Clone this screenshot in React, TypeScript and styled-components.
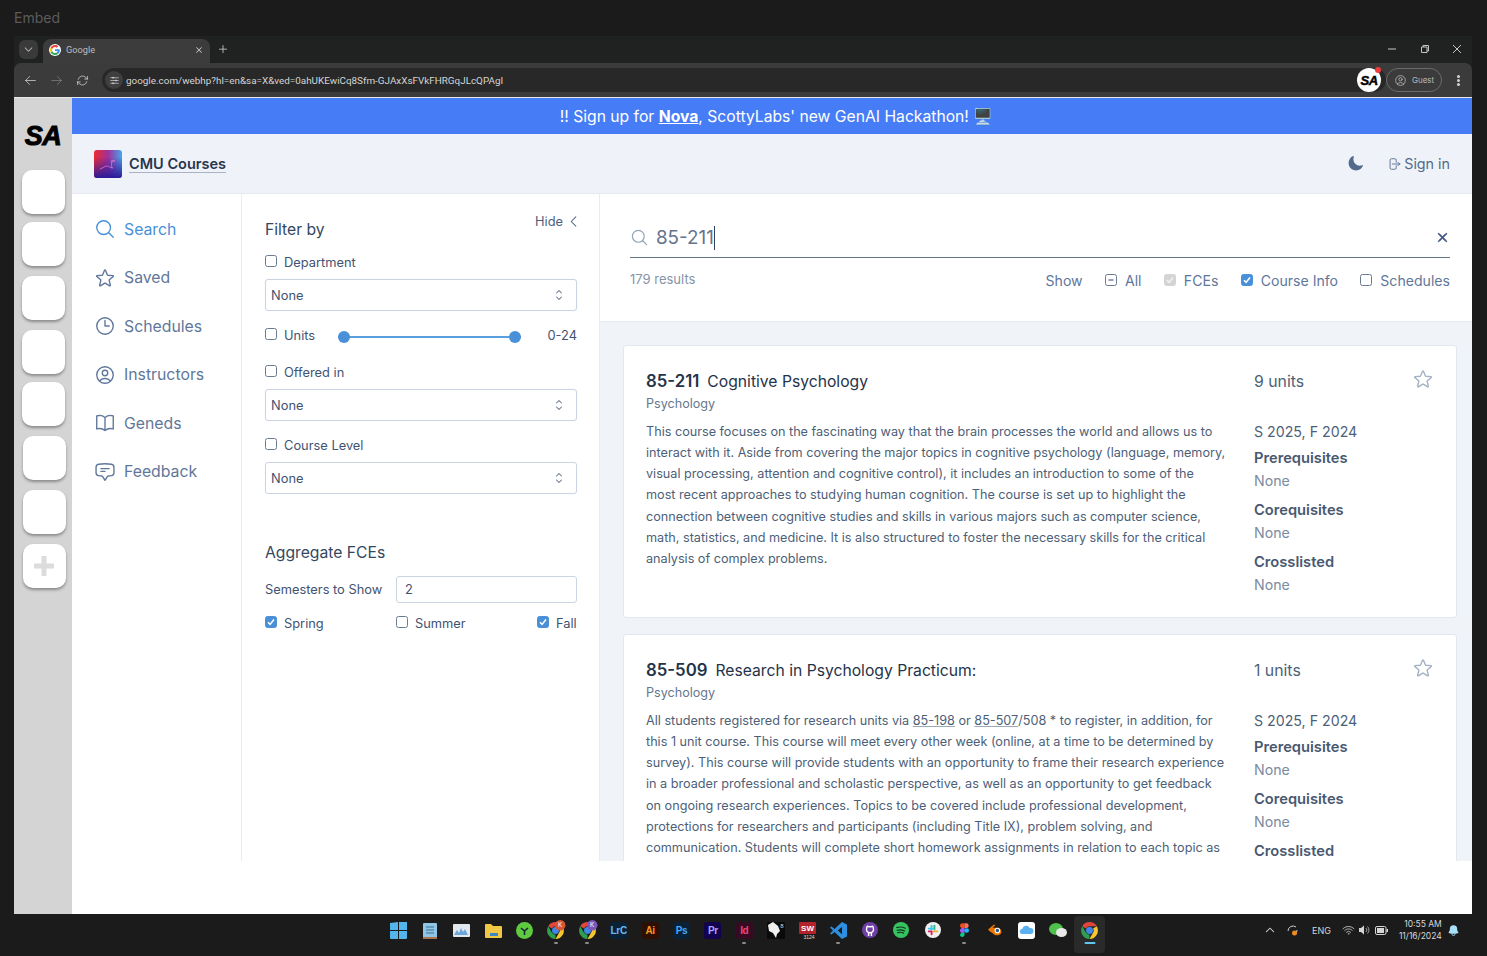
import { ReactNode } from 'react';
import styled, { createGlobalStyle } from 'styled-components';
import {
  HiOutlineMagnifyingGlass, HiOutlineStar, HiOutlineClock, HiOutlineUserCircle, HiOutlineBookOpen,
  HiOutlineChatBubbleBottomCenterText, HiMoon, HiOutlineArrowRightOnRectangle, HiChevronUpDown,
  HiChevronLeft, HiXMark, HiOutlineArrowLeft, HiOutlineArrowRight, HiOutlineArrowPath, HiPlus,
  HiChevronDown, HiChevronUp, HiOutlineAdjustmentsHorizontal, HiOutlineWifi, HiBell,
} from 'react-icons/hi2';

const GlobalStyle = createGlobalStyle`
  html, body { margin: 0; padding: 0; background: #1b1b1b; }
  body { font-family: "Inter", "Liberation Sans", sans-serif; }
  * { box-sizing: border-box; }
`;

const Screen = styled.div`
  width: 1487px; height: 956px; background: #1b1b1b; display: flex; flex-direction: column; overflow: hidden;
`;
const EmbedBar = styled.div`
  height: 36px; padding: 9px 0 0 14px; color: #5c5c5c; font-size: 14px; line-height: 17px;
`;
const Browser = styled.div`
  margin-left: 14px; width: 1458px; height: 878px; display: flex; flex-direction: column; background: #202221;
`;
const TabStrip = styled.div`
  height: 27px; padding: 3px 0 0 5px; display: flex; align-items: flex-start; color: #d8d8d8;
`;
const TabMenu = styled.div`
  width: 19px; height: 19px; margin-top: 1px; border-radius: 6px; background: #3a3a3a; display: flex; align-items: center; justify-content: center; font-size: 11px;
`;
const Tab = styled.div`
  width: 167px; height: 24px; margin-left: 5px; padding: 0 6px 3px; background: #3c3c3c; border-radius: 8px 8px 0 0; display: flex; align-items: center; gap: 5px; font-family: "Roboto", sans-serif; font-size: 9.2px; color: #bdbdbd;
`;
const TabClose = styled.span`
  margin-left: auto; display: flex; font-size: 10px; color: #e0e0e0;
`;
const NewTab = styled.div`
  margin: 4px 0 0 7px; display: flex; font-size: 12px;
`;
const WindowButtons = styled.div`
  margin-left: auto; width: 75px; margin-right: 10px; margin-top: 5px; display: flex; align-items: center; justify-content: space-between; color: #c4c4c4;
`;
const Toolbar = styled.div`
  height: 34px; background: #3b3b3b; border-radius: 7px 7px 0 0; display: flex; align-items: center; padding: 0 9px 0 10px; color: #c7c7c7;
`;
const NavIcons = styled.div`
  display: flex; gap: 13px; width: 78px; font-size: 13px;
`;
const NavIcon = styled.span<{ $dim?: boolean }>`
  display: flex; color: ${p => (p.$dim ? '#7a7a7a' : '#c7c7c7')};
`;
const Omnibox = styled.div`
  width: 1284px; height: 24px; border-radius: 12px; background: #282828; display: flex; align-items: center; padding: 0 3px; font-family: "Roboto", sans-serif; font-size: 9.9px; color: #d5d5d5; position: relative;
`;
const SiteInfo = styled.span`
  width: 18px; height: 18px; border-radius: 50%; background: #3f3f3f; display: flex; align-items: center; justify-content: center; font-size: 11px; margin-right: 3px;
`;
const ExtBadge = styled.div`
  position: absolute; right: 5px; top: 0; width: 24px; height: 24px; border-radius: 50%; background: #fff; display: flex; align-items: center; justify-content: center;
`;
const ExtDot = styled.span`
  position: absolute; right: 0; top: -1px; width: 6px; height: 6px; border-radius: 50%; background: #ee3b3b;
`;
const SaMark = styled.span<{ $size: number }>`
  font-family: "Liberation Sans", sans-serif; font-weight: 700; font-style: italic; color: #000; letter-spacing: -0.5px; font-size: ${p => p.$size}px; -webkit-text-stroke: ${p => p.$size / 28}px #000;
`;
const GuestPill = styled.div`
  width: 56px; height: 24px; border: 1px solid #6b6b6b; border-radius: 12px; display: flex; align-items: center; padding-left: 7px; gap: 5px; font-size: 8px; color: #b8b8b8;
`;
const KebabDots = styled.span`
  margin-left: 14.5px; width: 3px; height: 3px; border-radius: 50%; background: #d0d0d0; box-shadow: 0 -4px 0 #d0d0d0, 0 4px 0 #d0d0d0;
`;
const Viewport = styled.div`
  flex: 1; display: flex; min-height: 0; background: #fff; border-top: 1px solid #e8e8e8;
`;
const SaRail = styled.div`
  width: 58px; background: #d4d4d4; display: flex; flex-direction: column; align-items: center; padding-top: 23px;
`;
const RailTile = styled.div<{ $gap: number; $shift: number }>`
  width: 43px; height: 44px; margin-left: ${p => p.$shift}px; margin-bottom: ${p => p.$gap}px; border-radius: 10px; background: #fff; box-shadow: 0 2px 3px rgba(0,0,0,0.35); display: flex; align-items: center; justify-content: center; color: #dcdcdc;
`;
const RailLogo = styled.div`
  height: 49px; display: flex;
`;
const Page = styled.div`
  width: 1400px; display: flex; flex-direction: column;
`;
const Banner = styled.div`
  height: 36px; background: #467cf5; color: #fff; font-size: 15.7px; line-height: 37px; text-align: center; padding-left: 9px;
  b { font-weight: 700; text-decoration: underline; }
`;
const Header = styled.div`
  height: 60px; background: #eff3f9; border-bottom: 1px solid #e5e9f0; display: flex; align-items: center; padding: 0 22px 0 22px;
`;
const Brand = styled.a`
  margin: 1px 0 0 7px; font-size: 14.5px; font-weight: 600; color: #27364d; border-bottom: 1px solid #a8b4c6; line-height: 17px;
`;
const HeaderActions = styled.div`
  margin-left: auto; display: flex; align-items: center; color: #526a8c; font-size: 14.3px;
`;
const SignIn = styled.span`
  margin-left: 23px; display: flex; align-items: center; gap: 3px;
`;
const Columns = styled.div`
  height: 667px; display: flex; overflow: hidden;
`;
const NavCol = styled.nav`
  width: 170px; padding: 21px 0 0 22px; display: flex; flex-direction: column; gap: 20.6px; border-right: 1px solid #e8edf4;
`;
const NavItem = styled.div<{ $active?: boolean }>`
  height: 28px; display: flex; align-items: center; gap: 8px; font-size: 15.8px; color: ${p => (p.$active ? '#4a90d9' : '#5f779a')};
`;
const FilterCol = styled.aside`
  width: 358px; padding: 0 22px 0 23px; border-right: 1px solid #e8edf4; color: #3f5372; font-size: 12.85px;
`;
const FilterHead = styled.div`
  height: 58px; display: flex; justify-content: space-between; padding-top: 20px;
`;
const FilterTitle = styled.h2<{ $mt?: number }>`
  margin: ${p => p.$mt ?? 6}px 0 0; font-size: 15.7px; font-weight: 400; line-height: 20px; color: #34475f;
`;
const HideBtn = styled.span`
  display: flex; align-items: flex-start; gap: 3px; line-height: 15px; color: #4a5f7e; margin-right: -4px;
`;
const CheckRow = styled.label<{ $h?: number; $mt?: number }>`
  display: flex; align-items: center; gap: 7px; height: ${p => p.$h ?? 20}px; margin-top: ${p => p.$mt ?? 0}px;
`;
const Box = styled.span<{ $state: 'off' | 'on' | 'dim' | 'mixed' }>`
  width: 12px; height: 12px; margin-top: -2px; border-radius: 2.5px; flex: none; display: flex; align-items: center; justify-content: center;
  border: 1px solid ${p => (p.$state === 'on' ? '#4a90d9' : p.$state === 'dim' ? '#d4d4d4' : '#6b7a8e')};
  background: ${p => (p.$state === 'on' ? '#4a90d9' : p.$state === 'dim' ? '#d4d4d4' : '#fff')};
`;
const Select = styled.div`
  height: 32px; margin-top: 7px; padding: 0 9px 0 5px; border: 1px solid #cbd5e1; border-radius: 3px; display: flex; align-items: center; justify-content: space-between; color: #3f5372; box-shadow: 0 0 1px #dde4ee;
`;
const SliderWrap = styled.div`
  width: 183px; margin: 3px 0 0 16px; height: 12px; position: relative; display: flex; align-items: center;
`;
const SliderLine = styled.div`
  width: 100%; height: 2px; background: #5a9fdd;
`;
const SliderThumb = styled.span<{ $end?: boolean }>`
  position: absolute; top: 0; width: 12px; height: 12px; border-radius: 50%; background: #4a90d9;
  ${p => (p.$end ? 'right: 0;' : 'left: 0;')}
`;
const Spacer = styled.span`
  margin-left: auto;
`;
const SemRow = styled.div`
  margin-top: 13px; display: flex; align-items: center; justify-content: space-between;
`;
const SemInput = styled.div`
  width: 181px; height: 27px; border: 1px solid #cbd5e1; border-radius: 3px; padding-left: 8px; line-height: 26px;
`;
const SeasonRow = styled.div`
  margin-top: 10px; display: flex; height: 20px;
`;
const SeasonCell = styled.div<{ $w: number }>`
  width: ${p => p.$w}px;
`;
const ResultsCol = styled.main`
  width: 872px; background: #f0f4f8; display: flex; flex-direction: column;
`;
const SearchPane = styled.div`
  height: 128px; flex: none; background: #fff; border-bottom: 1px solid #e5e9f0; padding: 22px 22px 0 30px;
`;
const SearchRow = styled.div`
  height: 42px; border-bottom: 1px solid #64748b; display: flex; align-items: center; padding-top: 2px; color: #94a3b8;
`;
const SearchText = styled.span`
  margin-left: 7px; font-size: 18.8px; color: #64748b; border-right: 1px solid #33415a; line-height: 24px;
`;
const ClearBtn = styled.span`
  margin-left: auto; display: flex; color: #3a5080; font-size: 15px;
`;
const ResultsMeta = styled.div`
  margin-top: 14px; display: flex; align-items: center; justify-content: space-between; color: #5f779a; font-size: 14.1px;
`;
const ResultCount = styled.span`
  font-size: 13px; color: #8594a8; margin-top: -4px;
`;
const ShowRow = styled.div`
  display: flex; align-items: center; gap: 22.3px;
`;
const ShowItem = styled.span`
  display: flex; align-items: center; gap: 8px;
`;
const CardList = styled.div`
  padding: 23px 15px 0 23px; display: flex; flex-direction: column; gap: 16px;
`;
const Card = styled.article`
  height: 273px; flex: none; background: #fff; border: 1px solid #e2e8f0; border-radius: 3px; padding: 24px 22px 0; display: flex;
`;
const CardMain = styled.div`
  width: 608px;
`;
const CardTitle = styled.h3`
  margin: 0; font-size: 15.7px; line-height: 22px; font-weight: 400; color: #253349;
  b { font-size: 16.8px; font-weight: 600; margin-right: 8px; }
`;
const CardDept = styled.div`
  margin-top: 2px; font-size: 12.6px; line-height: 18px; color: #66788f;
`;
const CardDesc = styled.p`
  margin: 8px 0 0; width: 580px; font-size: 12.65px; line-height: 21.15px; color: #4d5f78;
  u { text-decoration-color: #9aa8ba; }
`;
const CardSide = styled.div`
  flex: 1; padding-top: 1px; color: #4d5f78; font-size: 14.2px; line-height: 22px;
`;
const UnitsRow = styled.div`
  display: flex; justify-content: space-between; align-items: flex-start; font-size: 15.8px; height: 50px;
`;
const StarBtn = styled.span`
  display: flex; color: #a3b1c4; margin-top: -3px; font-size: 22px;
`;
const SideBlock = styled.div`
  margin-top: 4px; height: 48px;
`;
const SideYears = styled.div`
  height: 22px;
`;
const SideLabel = styled.div`
  font-weight: 600; color: #48586f; font-size: 14.7px;
`;
const SideNone = styled.div`
  color: #7b8ba0; margin-top: 1px;
`;
const Taskbar = styled.div`
  height: 42px; display: flex; align-items: flex-start; padding: 2px 0 0 383.3px;
`;
const AppCell = styled.div<{ $focus?: boolean }>`
  width: 31.4px; height: 37px; flex: none; display: flex; align-items: center; justify-content: center; position: relative; border-radius: 4px; padding-bottom: 9px;
  background: ${p => (p.$focus ? '#2a2a2a' : 'transparent')};
`;
const RunDot = styled.span<{ $focus?: boolean }>`
  position: absolute; bottom: 9px; left: 50%; transform: translateX(-50%); height: 2px; border-radius: 1px;
  width: ${p => (p.$focus ? 11 : 4)}px; background: ${p => (p.$focus ? '#60c5f1' : '#8a8a8a')};
`;
const AdobeTile = styled.span<{ $bg: string; $fg: string }>`
  width: 17px; height: 17px; border-radius: 3px; font-family: "Liberation Sans", sans-serif; font-size: 10px; font-weight: 700; line-height: 17px; text-align: center; letter-spacing: -0.3px;
  background: ${p => p.$bg}; color: ${p => p.$fg};
`;
const Tray = styled.div`
  margin-left: auto; display: flex; align-items: center; height: 28px; color: #d5d5d5; font-size: 9px; width: 223px;
`;
const TrayItem = styled.span<{ $ml?: number }>`
  display: flex; align-items: center; margin-left: ${p => p.$ml ?? 0}px;
`;
const Clock = styled.div`
  margin-left: 11px; text-align: right; font-size: 8.5px; line-height: 12px; color: #d8d8d8;
`;

const Check = ({ color = '#fff' }: { color?: string }) => (
  <svg width="10" height="10" viewBox="0 0 10 10"><path d="M2 5.2l2.1 2.2L8 2.6" fill="none" stroke={color} strokeWidth="1.6" /></svg>
);

const CheckBox = ({ state }: { state: 'off' | 'on' | 'dim' | 'mixed' }) => (
  <Box $state={state}>
    {state === 'on' && <Check />}
    {state === 'dim' && <Check color="#f2f2f2" />}
    {state === 'mixed' && <svg width="8" height="8" viewBox="0 0 8 8"><path d="M1.5 4h5" stroke="#5b6b80" strokeWidth="1.3" /></svg>}
  </Box>
);

const GoogleG = () => (
  <svg width="12" height="12" viewBox="0 0 48 48">
    <circle cx="24" cy="24" r="24" fill="#fff" />
    <path d="M43 24.5c0-1.4-.1-2.7-.4-4H24v7.6h10.800c-.5 2.500-1.900 4.600-4 6l6.200 4.800C40.700 35.500 43 30.500 43 24.500z" fill="#4285f4" />
    <path d="M24 44c5.400 0 9.900-1.800 13-4.900l-6.200-4.800c-1.700 1.200-4 1.900-6.800 1.900-5.200 0-9.700-3.500-11.300-8.300l-6.400 5C9.500 39.500 16.200 44 24 44z" fill="#34a853" />
    <path d="M12.700 27.900c-.8-2.500-.8-5.300 0-7.800l-6.400-5c-2.800 5.500-2.800 12.300 0 17.800z" fill="#fbbc05" />
    <path d="M24 11.800c2.900 0 5.500 1 7.500 2.900l5.600-5.600C33.800 6 29.300 4 24 4 16.200 4 9.500 8.500 6.300 15.100l6.400 5c1.600-4.800 6.100-8.300 11.300-8.300z" fill="#ea4335" />
  </svg>
);

const ChromeGlyph = ({ badge, badgeColor }: { badge?: string; badgeColor?: string }) => (
  <svg width="21" height="21" viewBox="0 0 20 20">
    <path d="M10 2a8 8 0 0 1 6.93 4H10a4 4 0 0 0-3.46 2L3.07 6A8 8 0 0 1 10 2z" fill="#e2463a" />
    <path d="M16.93 6A8 8 0 0 1 10 18l3.46-6a4 4 0 0 0 0-4z" fill="#f7c52e" />
    <path d="M3.07 6l3.47 6a4 4 0 0 0 3.46 2v4A8 8 0 0 1 3.07 6z" fill="#2f9e4f" />
    <circle cx="10" cy="10" r="3.3" fill="#3f87ea" />
    {badge && <circle cx="14.5" cy="5" r="5" fill={badgeColor} />}
    {badge && <text x="14.5" y="7" fontSize="6" fontFamily="Liberation Sans" textAnchor="middle" fill="#fff">{badge}</text>}
  </svg>
);

const CourseLogo = () => (
  <svg width="28" height="28" viewBox="0 0 28 28">
    <defs>
      <linearGradient id="lg" x1="0" y1="0" x2="1" y2="0">
        <stop offset="0" stopColor="#ee2a2e" />
        <stop offset="0.5" stopColor="#a0309a" />
        <stop offset="1" stopColor="#45a6ec" />
      </linearGradient>
      <linearGradient id="lg2" x1="0" y1="0" x2="0" y2="1">
        <stop offset="0.25" stopColor="#2a1a9a" stopOpacity="0" />
        <stop offset="1" stopColor="#2a1a9a" stopOpacity="1" />
      </linearGradient>
    </defs>
    <rect width="28" height="28" rx="3" fill="url(#lg)" />
    <rect width="28" height="28" rx="3" fill="url(#lg2)" />
    <path d="M6 19c3-1 5-3 7-3s3 2 6 2M18 18c-1-3 0-6-1-7l3-1 1 1-3 1" fill="none" stroke="#d47ad8" strokeWidth="0.8" />
  </svg>
);

const taskApps: { node: ReactNode; run?: boolean; focus?: boolean }[] = [
  { node: <svg width="17" height="17" viewBox="0 0 17 17"><path d="M0 1l8-1v8H0zM9 0h8v8H9zM0 9h8v8H1a1 1 0 0 1-1-1zM9 9h8v7a1 1 0 0 1-1 1H9z" fill="#54b4ec" /></svg> },
  { node: <svg width="14" height="17" viewBox="0 0 14 17"><rect y="1" width="14" height="16" rx="1" fill="#8fc6e6" /><path d="M3 5h8M3 8h8M3 11h8" stroke="#3d6f91" /><rect y="15" width="14" height="2" fill="#a9754c" /></svg> },
  { node: <svg width="17" height="13" viewBox="0 0 17 13"><rect width="17" height="13" rx="1" fill="#e3e7ee" /><path d="M1 11l3-5 2 3 2-5 2 4 2-3 3 6z" fill="#6aa6dc" /></svg> },
  { node: <svg width="17" height="15" viewBox="0 0 17 15"><path d="M0 2a1 1 0 0 1 1-1h5l2 2h8a1 1 0 0 1 1 1v10a1 1 0 0 1-1 1H1a1 1 0 0 1-1-1z" fill="#f2c744" /><rect x="5" y="10" width="8" height="3" fill="#3f86c6" /></svg> },
  { node: <svg width="17" height="17" viewBox="0 0 17 17"><circle cx="8.5" cy="8.5" r="8.5" fill="#5fc93f" /><path d="M8.5 9V13M8.5 9L5 6M8.5 9L12 6" stroke="#123" strokeWidth="1.5" fill="none" /></svg> },
  { node: <ChromeGlyph badge="K" badgeColor="#d9552f" />, run: true },
  { node: <ChromeGlyph badge="K" badgeColor="#7c57b8" />, run: true },
  { node: <AdobeTile $bg="#0a2238" $fg="#6fb7ee">LrC</AdobeTile> },
  { node: <AdobeTile $bg="#2e0f04" $fg="#f7971d">Ai</AdobeTile> },
  { node: <AdobeTile $bg="#0a2238" $fg="#4aa8f5">Ps</AdobeTile> },
  { node: <AdobeTile $bg="#13024f" $fg="#a9a4ff">Pr</AdobeTile> },
  { node: <AdobeTile $bg="#360a20" $fg="#f0447f">Id</AdobeTile>, run: true },
  { node: <svg width="18" height="17" viewBox="0 0 18 17"><rect width="18" height="17" fill="#0a0a0a" /><path d="M1 3l5-3 5 4 2 5-3 3-1 4-3-5-4-2z" fill="#efefef" /><text x="15" y="6" fontSize="6" fontFamily="Liberation Sans" textAnchor="middle" fill="#ddd">8</text></svg> },
  { node: <svg width="17" height="17" viewBox="0 0 17 17"><rect width="17" height="12" rx="1" fill="#b5232a" /><text x="8.5" y="9" fontSize="8" fontWeight="700" fontFamily="Liberation Sans" textAnchor="middle" fill="#fff">SW</text><text x="10" y="16.5" fontSize="5" fontFamily="Liberation Sans" textAnchor="middle" fill="#ddd">3124</text></svg> },
  { node: <svg width="17" height="17" viewBox="0 0 17 17"><path d="M12 0l5 2.500v12L12 17 4.500 10 1.500 12.500 0 11.500 3 8.500 0 5.500l1.500-1L4.500 7zM12 4.700L7.800 8.500 12 12.300z" fill="#2d8fe0" /></svg>, run: true },
  { node: <svg width="16" height="16" viewBox="0 0 17 17"><circle cx="8.5" cy="8.5" r="8.5" fill="#6f3fa8" /><path d="M5 6.500c0-1 .2-1.500.7-2l1.800.5h2l1.800-.5c.5.5.7 1 .7 2 .8 2.500-.5 5-3.500 5s-4.300-2.500-3.500-5zM7 11.500V15M10 11.500V15" fill="none" stroke="#fff" strokeWidth="1.5" /></svg> },
  { node: <svg width="16" height="16" viewBox="0 0 17 17"><circle cx="8.5" cy="8.5" r="8.5" fill="#36c35f" /><path d="M4 6c3-1 6-1 9 .6M4.500 8.800c2.500-.8 5.200-.6 7.600.6M5 11.300c2-.6 4.300-.5 6.200.5" fill="none" stroke="#132" strokeWidth="1.3" strokeLinecap="round" /></svg> },
  { node: <svg width="16" height="16" viewBox="0 0 17 17"><circle cx="8.5" cy="8.5" r="8.5" fill="#efefef" /><path d="M7 4v4M4 7h4" stroke="#36c5f0" strokeWidth="2" strokeLinecap="round" /><path d="M10 4v4" stroke="#2eb67d" strokeWidth="2" strokeLinecap="round" /><path d="M9 10h4" stroke="#ecb22e" strokeWidth="2" strokeLinecap="round" /><path d="M7 10v3M4 10h3" stroke="#e01e5a" strokeWidth="2" strokeLinecap="round" /></svg> },
  { node: <svg width="9" height="15" viewBox="0 0 10 16"><path d="M0 3a3 3 0 0 1 3-3h2v5.300H3A2.600 2.600 0 0 1 0 3z" fill="#f24e1e" /><path d="M5 0h2a2.600 2.600 0 0 1 0 5.300H5z" fill="#ff7262" /><path d="M0 8a2.600 2.600 0 0 1 3-2.700h2v5.300H3A2.600 2.600 0 0 1 0 8z" fill="#a259ff" /><circle cx="7.4" cy="8" r="2.6" fill="#1abcfe" /><path d="M0 13.300a2.600 2.600 0 0 1 3-2.700h2v2.700a2.600 2.600 0 0 1-5 0z" fill="#0acf83" /></svg>, run: true },
  { node: <svg width="17" height="14" viewBox="0 0 18 15"><path d="M1 7l6-5 2 0-3 3 6 0c3 1 4 4 3 6-2 3-7 3-9 0L3 9z" fill="#ea7600" /><circle cx="11" cy="8" r="3" fill="#fff" /><circle cx="11" cy="8" r="1.8" fill="#265787" /></svg> },
  { node: <svg width="17" height="17" viewBox="0 0 17 17"><rect width="17" height="17" rx="3" fill="#fff" /><path d="M4.500 12a2.500 2.500 0 0 1-.3-5A4 4 0 0 1 11.700 6a3 3 0 0 1 1.300 6z" fill="#5ab0f0" /></svg> },
  { node: <svg width="18" height="15" viewBox="0 0 18 15"><ellipse cx="7" cy="6" rx="7" ry="6" fill="#4fc04a" /><ellipse cx="12.5" cy="9.5" rx="5.5" ry="4.5" fill="#e8e8e8" /></svg> },
  { node: <ChromeGlyph />, run: true, focus: true },
];

const navItems = [
  { label: 'Search', Icon: HiOutlineMagnifyingGlass, active: true },
  { label: 'Saved', Icon: HiOutlineStar },
  { label: 'Schedules', Icon: HiOutlineClock },
  { label: 'Instructors', Icon: HiOutlineUserCircle },
  { label: 'Geneds', Icon: HiOutlineBookOpen },
  { label: 'Feedback', Icon: HiOutlineChatBubbleBottomCenterText },
];

const railTiles = [
  { gap: 8, shift: 0 },
  { gap: 10, shift: 0 },
  { gap: 10, shift: 1 },
  { gap: 8, shift: 1 },
  { gap: 10, shift: 1 },
  { gap: 10, shift: 2 },
  { gap: 10, shift: 2 },
];

const SelectBox = () => (
  <Select>None<HiChevronUpDown size={16} color="#64748b" /></Select>
);

const CourseCard = ({ code, name, units, children, lastNone = true }: { code: string; name: string; units: string; children: ReactNode; lastNone?: boolean }) => (
  <Card>
    <CardMain>
      <CardTitle><b>{code}</b>{name}</CardTitle>
      <CardDept>Psychology</CardDept>
      <CardDesc>{children}</CardDesc>
    </CardMain>
    <CardSide>
      <UnitsRow>{units}<StarBtn><HiOutlineStar /></StarBtn></UnitsRow>
      <SideYears>S 2025, F 2024</SideYears>
      <SideBlock><SideLabel>Prerequisites</SideLabel><SideNone>None</SideNone></SideBlock>
      <SideBlock><SideLabel>Corequisites</SideLabel><SideNone>None</SideNone></SideBlock>
      <SideBlock><SideLabel>Crosslisted</SideLabel>{lastNone && <SideNone>None</SideNone>}</SideBlock>
    </CardSide>
  </Card>
);

export default function App() {
  return (
    <Screen>
      <GlobalStyle />
      <EmbedBar>Embed</EmbedBar>
      <Browser>
        <TabStrip>
          <TabMenu><HiChevronDown /></TabMenu>
          <Tab><GoogleG />Google<TabClose><HiXMark /></TabClose></Tab>
          <NewTab><HiPlus /></NewTab>
          <WindowButtons>
            <svg width="10" height="10" viewBox="0 0 10 10"><path d="M1 5h8" stroke="currentColor" /></svg>
            <svg width="10" height="10" viewBox="0 0 10 10"><path d="M1.5 3h5.500v5.500h-5.500zM3 3V1.500h5.500V7H7" fill="none" stroke="currentColor" /></svg>
            <svg width="10" height="10" viewBox="0 0 10 10"><path d="M1 1l8 8M9 1l-8 8" stroke="currentColor" /></svg>
          </WindowButtons>
        </TabStrip>
        <Toolbar>
          <NavIcons>
            <NavIcon><HiOutlineArrowLeft /></NavIcon>
            <NavIcon $dim><HiOutlineArrowRight /></NavIcon>
            <NavIcon><HiOutlineArrowPath /></NavIcon>
          </NavIcons>
          <Omnibox>
            <SiteInfo><HiOutlineAdjustmentsHorizontal /></SiteInfo>
            google.com/webhp?hl=en&amp;sa=X&amp;ved=0ahUKEwiCq8Sfm-GJAxXsFVkFHRGqJLcQPAgI
            <ExtBadge><SaMark $size={13}>SA</SaMark><ExtDot /></ExtBadge>
          </Omnibox>
          <GuestPill><HiOutlineUserCircle size={13} />Guest</GuestPill>
          <KebabDots />
        </Toolbar>
        <Viewport>
          <SaRail>
            <RailLogo><SaMark $size={27}>SA</SaMark></RailLogo>
            {railTiles.map((t, i) => <RailTile key={i} $gap={t.gap} $shift={t.shift} />)}
            <RailTile $gap={0} $shift={2}><svg width="20" height="20" viewBox="0 0 20 20"><path d="M7.5 0h5v7.500H20v5h-7.500V20h-5v-7.500H0v-5h7.500z" fill="currentColor" /></svg></RailTile>
          </SaRail>
          <Page>
            <Banner>!! Sign up for <b>Nova</b>, ScottyLabs' new GenAI Hackathon! 🖥️</Banner>
            <Header>
              <CourseLogo />
              <Brand>CMU Courses</Brand>
              <HeaderActions>
                <HiMoon size={17} />
                <SignIn><HiOutlineArrowRightOnRectangle size={14} />Sign in</SignIn>
              </HeaderActions>
            </Header>
            <Columns>
              <NavCol>
                {navItems.map(({ label, Icon, active }) => (
                  <NavItem key={label} $active={active}><Icon size={22} />{label}</NavItem>
                ))}
              </NavCol>
              <FilterCol>
                <FilterHead>
                  <FilterTitle>Filter by</FilterTitle>
                  <HideBtn>Hide <HiChevronLeft size={15} /></HideBtn>
                </FilterHead>
                <CheckRow><CheckBox state="off" />Department</CheckRow>
                <SelectBox />
                <CheckRow $h={24} $mt={12}>
                  <CheckBox state="off" />Units
                  <SliderWrap><SliderLine /><SliderThumb /><SliderThumb $end /></SliderWrap>
                  <Spacer>0-24</Spacer>
                </CheckRow>
                <CheckRow $mt={15}><CheckBox state="off" />Offered in</CheckRow>
                <SelectBox />
                <CheckRow $mt={14}><CheckBox state="off" />Course Level</CheckRow>
                <SelectBox />
                <FilterTitle $mt={49}>Aggregate FCEs</FilterTitle>
                <SemRow>Semesters to Show<SemInput>2</SemInput></SemRow>
                <SeasonRow>
                  <SeasonCell $w={131}><CheckRow><CheckBox state="on" />Spring</CheckRow></SeasonCell>
                  <SeasonCell $w={141}><CheckRow><CheckBox state="off" />Summer</CheckRow></SeasonCell>
                  <CheckRow><CheckBox state="on" />Fall</CheckRow>
                </SeasonRow>
              </FilterCol>
              <ResultsCol>
                <SearchPane>
                  <SearchRow>
                    <HiOutlineMagnifyingGlass size={19} />
                    <SearchText>85-211</SearchText>
                    <ClearBtn><HiXMark strokeWidth={1.5} /></ClearBtn>
                  </SearchRow>
                  <ResultsMeta>
                    <ResultCount>179 results</ResultCount>
                    <ShowRow>
                      <span>Show</span>
                      <ShowItem><CheckBox state="mixed" />All</ShowItem>
                      <ShowItem><CheckBox state="dim" />FCEs</ShowItem>
                      <ShowItem><CheckBox state="on" />Course Info</ShowItem>
                      <ShowItem><CheckBox state="off" />Schedules</ShowItem>
                    </ShowRow>
                  </ResultsMeta>
                </SearchPane>
                <CardList>
                  <CourseCard code="85-211" name="Cognitive Psychology" units="9 units">
                    This course focuses on the fascinating way that the brain processes the world and allows us to interact with it. Aside from covering the major topics in cognitive psychology (language, memory, visual processing, attention and cognitive control), it includes an introduction to some of the most recent approaches to studying human cognition. The course is set up to highlight the connection between cognitive studies and skills in various majors such as computer science, math, statistics, and medicine. It is also structured to foster the necessary skills for the critical analysis of complex problems.
                  </CourseCard>
                  <CourseCard code="85-509" name="Research in Psychology Practicum:" units="1 units" lastNone={false}>
                    All students registered for research units via <u>85-198</u> or <u>85-507</u>/508 * to register, in addition, for this 1 unit course. This course will meet every other week (online, at a time to be determined by survey). This course will provide students with an opportunity to frame their research experience in a broader professional and scholastic perspective, as well as an opportunity to get feedback on ongoing research experiences. Topics to be covered include professional development, protections for researchers and participants (including Title IX), problem solving, and communication. Students will complete short homework assignments in relation to each topic as
                  </CourseCard>
                </CardList>
              </ResultsCol>
            </Columns>
          </Page>
        </Viewport>
      </Browser>
      <Taskbar>
        {taskApps.map((a, i) => (
          <AppCell key={i} $focus={a.focus}>{a.node}{a.run && <RunDot $focus={a.focus} />}</AppCell>
        ))}
        <Tray>
          <TrayItem><HiChevronUp size={12} /></TrayItem>
          <TrayItem $ml={9}><svg width="15" height="15" viewBox="0 0 15 15"><path d="M3 8a5 5 0 0 1 8-4M12 7a5 5 0 0 1-3 5" fill="none" stroke="#cfcfcf" /><circle cx="9.5" cy="10" r="2.5" fill="#f08a1d" /></svg></TrayItem>
          <TrayItem $ml={12}>ENG</TrayItem>
          <TrayItem $ml={11}><HiOutlineWifi size={13} /></TrayItem>
          <TrayItem $ml={3}><svg width="12" height="12" viewBox="0 0 12 12"><path d="M1 4h2l3-2.500v9L3 8H1z" fill="#d5d5d5" /><path d="M8 4a3 3 0 0 1 0 4M9.500 2.500a5 5 0 0 1 0 7" fill="none" stroke="#9a9a9a" /></svg></TrayItem>
          <TrayItem $ml={5}><svg width="13" height="9" viewBox="0 0 13 9"><rect x="0.5" y="0.5" width="10.5" height="8" rx="1.5" fill="none" stroke="#d5d5d5" /><rect x="2" y="2" width="7" height="5" fill="#d5d5d5" /><rect x="11.5" y="3" width="1.5" height="3" fill="#d5d5d5" /></svg></TrayItem>
          <Clock>10:55 AM<br />11/16/2024</Clock>
          <TrayItem $ml={5}><HiBell size={13} color="#a8e0fa" /></TrayItem>
        </Tray>
      </Taskbar>
    </Screen>
  );
}
